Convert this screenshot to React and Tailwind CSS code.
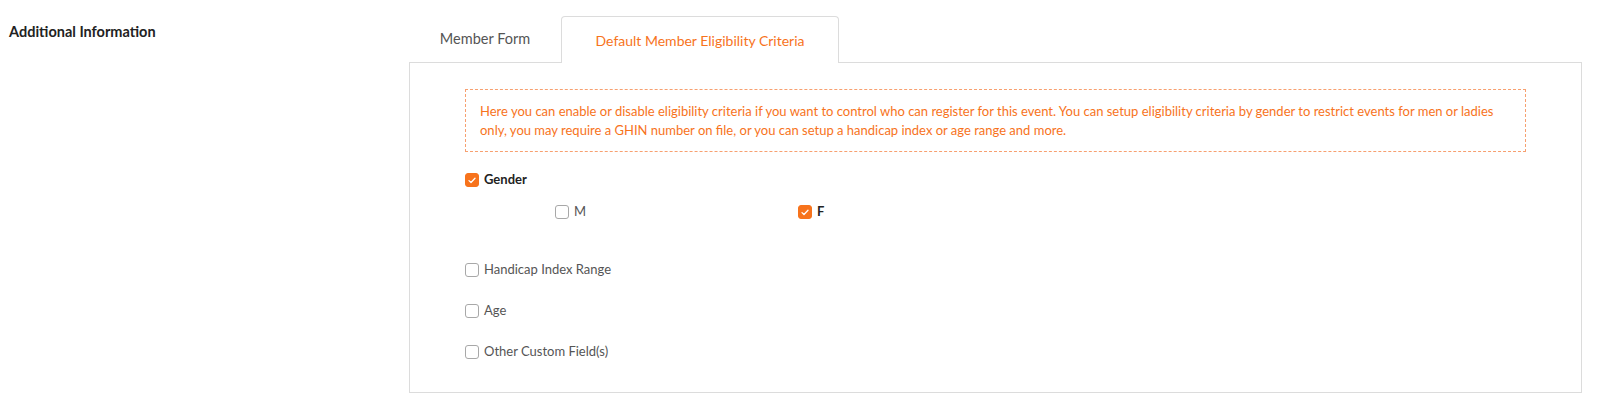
import React from "react";

const Check = ({ checked }) => (
  <span
    className={`flex h-[14px] w-[14px] shrink-0 items-center justify-center rounded-[3px] border ${
      checked ? "border-[#f7731c] bg-[#f7731c]" : "border-[#a8a8a8] bg-white"
    }`}
  >
    {checked && (
      <svg width="8" height="7" viewBox="0 0 8 7" fill="none">
        <path d="M1 3.6 L3 5.5 L7 1.2" stroke="white" strokeWidth="1.3" strokeLinecap="round" strokeLinejoin="round" />
      </svg>
    )}
  </span>
);

const Option = ({ label, checked, bold }) => (
  <label className="flex h-[20px] items-center gap-[5px]">
    <Check checked={checked} />
    <span className={`text-[13px] ${bold ? "font-bold text-[#222]" : "text-[#555]"}`}>{label}</span>
  </label>
);

const App = () => {
  return (
    <div className="flex h-[406px] w-[1600px] bg-white font-['Lato',sans-serif] text-[#222]">
      <div className="w-[409px] shrink-0 pl-[9px] pt-[21px]">
        <h3 className="text-[14.5px] font-bold text-[#222]">Additional Information</h3>
      </div>

      <div className="flex w-[1173px] flex-col pt-[16px]">
        <div className="flex h-[46px]">
          <button className="flex w-[152px] items-center justify-center text-[14.5px] text-[#555]">Member Form</button>
          <button className="relative z-10 -mb-px flex w-[278px] items-center justify-center rounded-t-[4px] border border-b-0 border-[#dcdcdc] bg-white text-[14px] text-[#f7731c]">
            Default Member Eligibility Criteria
          </button>
        </div>

        <div className="h-[331px] border border-[#dcdcdc] px-[55px] pt-[26px]">
          <div className="border border-dashed border-[#f7a070] px-[14px] pb-[11px] pt-[12px] text-[13px] leading-[19px] text-[#f7731c]">
            Here you can enable or disable eligibility criteria if you want to control who can register for this event. You can setup eligibility criteria by gender to restrict events for men or ladies only, you may require a GHIN number on file, or you can setup a handicap index or age range and more.
          </div>

          <div className="mt-[18px]">
            <Option label="Gender" checked bold />
          </div>
          <div className="mt-[12px] flex pl-[90px]">
            <div className="w-[243px]">
              <Option label="M" />
            </div>
            <Option label="F" checked bold />
          </div>

          <div className="mt-[38px] flex flex-col gap-[21px]">
            <Option label="Handicap Index Range" />
            <Option label="Age" />
            <Option label="Other Custom Field(s)" />
          </div>
        </div>
      </div>
    </div>
  );
};

export default App;
